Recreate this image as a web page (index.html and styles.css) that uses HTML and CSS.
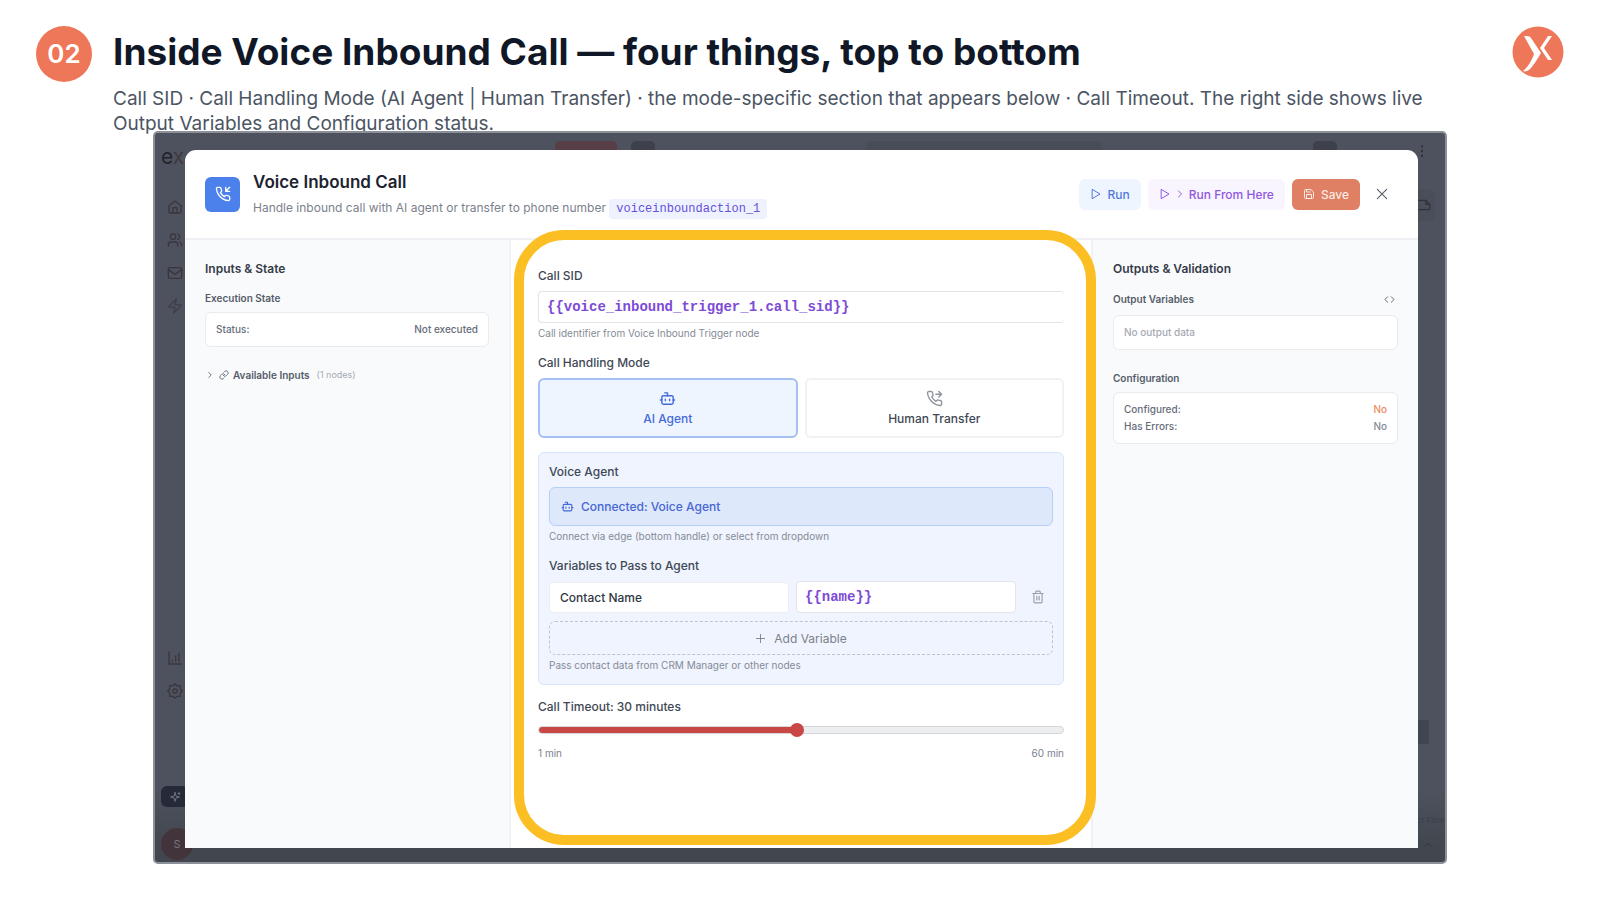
FILE: index.html
```html
<!DOCTYPE html>
<html lang="en">
<head>
    <meta charset="UTF-8">
    <title>Inside Voice Inbound Call</title>
    <link rel="stylesheet" href="styles.css">
</head>
<body>
    <!-- Icon shapes used more than once -->
    <svg class="sprite" aria-hidden="true">
        <symbol id="phone" viewBox="0 0 24 24"><path d="M22 16.92v3a2 2 0 0 1-2.18 2 19.79 19.79 0 0 1-8.63-3.07 19.5 19.5 0 0 1-6-6 19.79 19.79 0 0 1-3.07-8.67A2 2 0 0 1 4.11 2h3a2 2 0 0 1 2 1.72 12.84 12.84 0 0 0 .7 2.81 2 2 0 0 1-.45 2.11L8.09 9.91a16 16 0 0 0 6 6l1.27-1.27a2 2 0 0 1 2.11-.45 12.84 12.84 0 0 0 2.81.7A2 2 0 0 1 22 16.92z"/></symbol>
        <symbol id="bot" viewBox="0 0 24 24"><path d="M12 8V4H8"/><rect x="4" y="8" width="16" height="12" rx="2"/><path d="M2 14h2M20 14h2M15 13v2M9 13v2"/></symbol>
        <symbol id="play" viewBox="0 0 24 24"><path d="M5 3l15 9-15 9z"/></symbol>
        <symbol id="chevron" viewBox="0 0 24 24"><path d="M9 18l6-6-6-6"/></symbol>
    </svg>

    <header class="slide-header">
        <span class="step-badge">02</span>
        <div class="slide-text">
            <h1>Inside Voice Inbound Call — four things, top to bottom</h1>
            <p>Call SID · Call Handling Mode (AI Agent | Human Transfer) · the mode-specific section that appears below · Call Timeout. The right side shows live Output Variables and Configuration status.</p>
        </div>
        <svg class="brand" viewBox="0 0 52 52" aria-label="Logo">
            <circle cx="26" cy="26" r="25.5" fill="#ee7759"/>
            <path d="M12 10c3 0 6 0 7 2l10 15c-4 7-8 13-12 17-2 1-4 2-6 1 5-4 9-11 11-17z" fill="#fff"/>
            <path d="M40 10h-4l-8 12 8 12h4l-8-12z" fill="#fff"/>
        </svg>
    </header>

    <main class="frame">
        <!-- Dimmed app behind the dialog -->
        <div class="app" aria-hidden="true">
            <div class="app-top">
                <span class="app-logo">e<span>x</span></span>
                <span class="chip red"></span>
                <span class="chip dark"></span>
                <span class="chip wide"></span>
                <span class="chip dark small"></span>
                <svg class="icon dots" viewBox="0 0 24 24"><path d="M12 4v.1M12 12v.1M12 20v.1"/></svg>
            </div>
            <div class="app-side">
                <svg class="icon" viewBox="0 0 24 24"><path d="M3 10l9-7 9 7v9a2 2 0 0 1-2 2H5a2 2 0 0 1-2-2z"/><path d="M9 21v-8h6v8"/></svg>
                <svg class="icon" viewBox="0 0 24 24"><path d="M16 21v-2a4 4 0 0 0-4-4H6a4 4 0 0 0-4 4v2"/><circle cx="9" cy="7" r="4"/><path d="M22 21v-2a4 4 0 0 0-3-3.87M16 3.13a4 4 0 0 1 0 7.75"/></svg>
                <svg class="icon" viewBox="0 0 24 24"><rect x="2" y="4" width="20" height="16" rx="2"/><path d="M22 7l-10 7L2 7"/></svg>
                <svg class="icon faint" viewBox="0 0 24 24"><path d="M4 14a1 1 0 0 1-.8-1.6l9.9-10.2a.5.5 0 0 1 .9.5L12 9a1 1 0 0 0 1 1h7a1 1 0 0 1 .8 1.6l-9.9 10.2a.5.5 0 0 1-.9-.5L12 15a1 1 0 0 0-1-1z"/></svg>
                <svg class="icon lower" viewBox="0 0 24 24"><path d="M3 3v18h18M8 17v-2M13 17V9M18 17V5"/></svg>
                <svg class="icon" viewBox="0 0 24 24"><path d="M12 1l3 3 5 0 0 5 3 3-3 3 0 5-5 0-3 3-3-3-5 0 0-5-3-3 3-3 0-5 5 0z"/><circle cx="12" cy="12" r="3"/></svg>
                <span class="sparkle"><svg class="icon" viewBox="0 0 24 24"><path d="M12 3l2 7 7 2-7 2-2 7-2-7-7-2 7-2zM20 3v4M18 5h4"/></svg></span>
                <span class="avatar">S</span>
            </div>
            <div class="app-right">
                <span class="note"><svg class="icon" viewBox="0 0 24 24"><path d="M2 4h13l7 7v7a2 2 0 0 1-2 2H2M15 4v7h7"/></svg></span>
                <span class="map"></span>
                <span class="flow">ct Flow</span>
                <svg class="icon" viewBox="0 0 24 24"><path d="M5 15l7-7 7 7"/></svg>
            </div>
        </div>

        <section class="modal">
            <header class="modal-header">
                <span class="node-icon"><svg class="icon" viewBox="0 0 24 24"><use href="#phone"/><path d="M16 2v6h6M22 2l-6 6"/></svg></span>
                <div class="node-title">
                    <h2>Voice Inbound Call</h2>
                    <p>Handle inbound call with AI agent or transfer to phone number <code>voiceinboundaction_1</code></p>
                </div>
                <div class="actions">
                    <button class="btn run"><svg class="icon"><use href="#play"/></svg>Run</button>
                    <button class="btn run-from"><svg class="icon"><use href="#play"/></svg><svg class="icon"><use href="#chevron"/></svg><span>Run From Here</span></button>
                    <button class="btn save"><svg class="icon" viewBox="0 0 24 24"><path d="M15 3H5a2 2 0 0 0-2 2v14a2 2 0 0 0 2 2h14a2 2 0 0 0 2-2V9z"/><path d="M17 21v-8H7v8M7 3v5h8"/></svg>Save</button>
                    <button class="close" aria-label="Close"><svg class="icon" viewBox="0 0 24 24"><path d="M4 4l16 16M20 4L4 20"/></svg></button>
                </div>
            </header>

            <div class="modal-body">
                <!-- Inputs -->
                <aside class="side">
                    <h3>Inputs &amp; State</h3>
                    <h4>Execution State</h4>
                    <div class="card"><div class="row"><span>Status:</span><span>Not executed</span></div></div>
                    <button class="available">
                        <svg class="icon"><use href="#chevron"/></svg>
                        <svg class="icon" viewBox="0 0 24 24"><path d="M10 13a5 5 0 0 0 7.540.540l3-3a5 5 0 0 0-7.070-7.070l-1.720 1.710"/><path d="M14 11a5 5 0 0 0-7.540-.540l-3 3a5 5 0 0 0 7.070 7.070l1.710-1.710"/></svg>
                        Available Inputs <small>(1 nodes)</small>
                    </button>
                </aside>

                <!-- Node settings -->
                <div class="settings">
                    <label class="label" for="call-sid">Call SID</label>
                    <input class="field sid" id="call-sid" type="text" value="{{voice_inbound_trigger_1.call_sid}}">
                    <p class="help">Call identifier from Voice Inbound Trigger node</p>

                    <span class="label spaced">Call Handling Mode</span>
                    <div class="modes">
                        <button class="mode active"><svg class="icon"><use href="#bot"/></svg>AI Agent</button>
                        <button class="mode"><svg class="icon" viewBox="0 0 24 24"><use href="#phone"/><path d="M18 2l4 4-4 4M14 6h8"/></svg>Human Transfer</button>
                    </div>

                    <div class="agent">
                        <span class="label">Voice Agent</span>
                        <div class="connected"><svg class="icon"><use href="#bot"/></svg>Connected: Voice Agent</div>
                        <p class="help">Connect via edge (bottom handle) or select from dropdown</p>

                        <span class="label spaced">Variables to Pass to Agent</span>
                        <div class="variable">
                            <input class="field name" type="text" value="Contact Name" aria-label="Variable name">
                            <input class="field value" type="text" value="{{name}}" aria-label="Variable value">
                            <button class="trash" aria-label="Remove variable"><svg class="icon" viewBox="0 0 24 24"><path d="M3 6h18M19 6v14a2 2 0 0 1-2 2H7a2 2 0 0 1-2-2V6M8 6V4a2 2 0 0 1 2-2h4a2 2 0 0 1 2 2v2M10 11v6M14 11v6"/></svg></button>
                        </div>
                        <button class="add"><svg class="icon" viewBox="0 0 24 24"><path d="M3 12h18M12 3v18"/></svg>Add Variable</button>
                        <p class="help">Pass contact data from CRM Manager or other nodes</p>
                    </div>

                    <label class="label spaced" for="timeout">Call Timeout: 30 minutes</label>
                    <input class="slider" id="timeout" type="range" min="1" max="60" value="30">
                    <div class="range"><span>1 min</span><span>60 min</span></div>
                </div>

                <!-- Outputs -->
                <aside class="side outputs">
                    <h3>Outputs &amp; Validation</h3>
                    <h4>Output Variables <svg class="icon" viewBox="0 0 24 24"><path d="M8 6l-6 6 6 6M16 6l6 6-6 6"/></svg></h4>
                    <div class="card empty">No output data</div>
                    <h4 class="config-title">Configuration</h4>
                    <div class="card">
                        <div class="row"><span>Configured:</span><span class="warn">No</span></div>
                        <div class="row"><span>Has Errors:</span><span class="muted">No</span></div>
                    </div>
                </aside>
            </div>
        </section>
    </main>
</body>
</html>
```
FILE: styles.css
```css
* {
    box-sizing: border-box;
}

body {
    margin: 0;
    min-height: 100vh;
    display: flex;
    flex-direction: column;
    background: #fff;
    color: #414855;
    font-family: Inter, "Liberation Sans", sans-serif;
}

h1, h2, h3, h4, p {
    margin: 0;
}

button, input {
    font-family: inherit;
    margin: 0;
}

button {
    border: none;
    background: none;
    padding: 0;
    cursor: pointer;
}

.sprite {
    position: absolute;
    width: 0;
    height: 0;
}

.icon {
    width: 14px;
    height: 14px;
    fill: none;
    stroke: currentColor;
    stroke-width: 2;
    stroke-linecap: round;
    stroke-linejoin: round;
    flex-shrink: 0;
}

/* Slide heading */
.slide-header {
    display: flex;
    align-items: flex-start;
    padding: 26px 36px 0;
    height: 131px;
}

.step-badge {
    width: 56px;
    height: 56px;
    border-radius: 50%;
    background: #ee7759;
    color: #fff;
    font-size: 26px;
    font-weight: 600;
    line-height: 56px;
    text-align: center;
    flex-shrink: 0;
    margin-right: 21px;
}

.slide-text {
    flex: 1;
}

.slide-text h1 {
    color: #101828;
    font-size: 37px;
    font-weight: 700;
    line-height: 52px;
}

.slide-text p {
    max-width: 1360px;
    padding-top: 8px;
    color: #4b5563;
    font-size: 19px;
    line-height: 25px;
}

.brand {
    width: 52px;
    height: 52px;
    flex-shrink: 0;
}

/* Screenshot frame */
.frame {
    position: relative;
    flex: 1;
    display: flex;
    margin: 0 153px 36px;
    padding: 17px 27px 14px 30px;
    border: 2px solid #8b9099;
    border-radius: 5px;
    background: linear-gradient(#4d525e 90%, #42464e 98%);
}

.app {
    position: absolute;
    inset: 0;
    overflow: hidden;
    color: #30313a;
}

.app-top {
    display: flex;
    height: 50px;
    padding: 8px 16px 0 6px;
    gap: 14px;
}

.app-logo {
    width: 380px;
    color: #22242d;
    font-size: 21px;
    line-height: 32px;
}

.app-logo span {
    color: #43383e;
}

.chip {
    width: 62px;
    height: 22px;
    border-radius: 5px;
    background: #583e46;
}

.chip.dark {
    width: 24px;
    background: #3e414b;
}

.chip.wide {
    width: 236px;
    margin: 0 auto;
    background: #484d58;
}

.chip.small {
    margin-right: 64px;
}

.app-top .dots {
    margin-top: 3px;
    stroke-width: 4;
}

.app-side {
    position: absolute;
    top: 66px;
    bottom: 0;
    left: 0;
    width: 40px;
    display: flex;
    flex-direction: column;
    align-items: center;
    gap: 17px;
    color: #3b363e;
}

.app-side .icon {
    width: 16px;
    height: 16px;
}

.app-side .faint {
    opacity: 0.7;
}

.app-side .lower {
    margin-top: auto;
}

.sparkle {
    display: flex;
    align-items: center;
    justify-content: center;
    width: 28px;
    height: 21px;
    margin-top: 70px;
    border-radius: 6px;
    background: #252938;
    color: #70737d;
}

.app-side .sparkle .icon {
    width: 12px;
    height: 12px;
}

.avatar {
    width: 32px;
    height: 32px;
    margin: 4px 0 2px 4px;
    border-radius: 50%;
    background: #43343b;
    color: #777780;
    font-size: 11px;
    line-height: 32px;
    text-align: center;
    flex-shrink: 0;
}

.app-right {
    position: absolute;
    top: 56px;
    right: 0;
    bottom: 12px;
    width: 28px;
    display: flex;
    flex-direction: column;
}

.note {
    width: 18px;
    padding: 9px 0;
    border-radius: 0 6px 6px 0;
    background: #494e59;
    line-height: 0;
}

.map {
    width: 12px;
    height: 24px;
    margin-top: auto;
    margin-bottom: 70px;
    background: #41454f;
}

.flow {
    color: #3b3f48;
    font-size: 8px;
    line-height: 12px;
    white-space: nowrap;
}

.app-right > .icon {
    width: 10px;
    height: 10px;
    margin: 14px 6px 0;
}

/* Dialog */
.modal {
    position: relative;
    flex: 1;
    display: flex;
    flex-direction: column;
    border-radius: 11px 11px 0 0;
    background: #fff;
}

.modal-header {
    display: flex;
    align-items: center;
    height: 90px;
    padding: 0 29px 0 20px;
    border-bottom: 2px solid #eff0f3;
}

.node-icon {
    display: flex;
    align-items: center;
    justify-content: center;
    width: 35px;
    height: 35px;
    margin-right: 13px;
    border-radius: 6px;
    background: #4c80ea;
    color: #fff;
}

.node-icon .icon {
    width: 16px;
    height: 16px;
}

.node-title {
    flex: 1;
}

.node-title h2 {
    color: #1d2330;
    font-size: 17px;
    font-weight: 600;
    line-height: 24px;
    padding-bottom: 4px;
}

.node-title p {
    color: #7b818d;
    font-size: 12px;
    line-height: 20px;
}

.node-title code {
    display: inline-block;
    padding: 0 7px;
    border-radius: 4px;
    background: #eef2ff;
    color: #6550dc;
    font-family: "Liberation Mono", monospace;
    font-size: 12px;
}

.actions {
    display: flex;
    align-items: center;
    gap: 7px;
}

.btn {
    display: flex;
    align-items: center;
    gap: 6px;
    height: 31px;
    padding: 0 11px;
    border-radius: 6px;
    font-size: 12px;
    font-weight: 500;
}

.btn .icon {
    width: 12px;
    height: 12px;
}

.run {
    background: #eff5ff;
    color: #5378df;
}

.run-from {
    gap: 3px;
    background: #f8f5ff;
    color: #9058e2;
}

.save {
    background: #df7f63;
    color: #fdeae4;
}

.close {
    margin-left: 8px;
    color: #59606c;
    line-height: 0;
}

.modal-body {
    flex: 1;
    display: grid;
    grid-template-columns: 326px 1fr 327px;
}

.side {
    padding: 21px 20px;
    border-right: 2px solid #f1f2f5;
    background: #f9fafc;
}

.outputs {
    border-right: none;
    border-left: 2px solid #f1f2f5;
}

.side h3 {
    color: #353c49;
    font-size: 12px;
    font-weight: 600;
    line-height: 16px;
}

.side h4 {
    display: flex;
    align-items: center;
    justify-content: space-between;
    margin: 13px 0 6px;
    color: #555c69;
    font-size: 10px;
    font-weight: 600;
    line-height: 16px;
}

.outputs h4 {
    margin: 14px 0 8px;
}

.outputs h4 .icon {
    width: 11px;
    height: 11px;
    margin-right: 3px;
}

.outputs .config-title {
    margin: 20px 0 6px;
}

.card {
    padding: 8px 10px;
    border: 1px solid #e9ebef;
    border-radius: 6px;
    background: #fff;
    font-size: 10px;
    font-weight: 500;
    line-height: 17px;
}

.card.empty {
    color: #a5aab3;
}

.row {
    display: flex;
    justify-content: space-between;
    color: #666d79;
}

.warn {
    color: #ef8a62;
}

.muted {
    color: #858b96;
}

.available {
    display: flex;
    align-items: center;
    gap: 4px;
    margin-top: 20px;
    color: #555c69;
    font-size: 10px;
    font-weight: 600;
    line-height: 16px;
}

.available .icon {
    width: 10px;
    height: 10px;
}

.available small {
    margin-left: 3px;
    color: #a5aab3;
    font-size: 9px;
    font-weight: 400;
}

/* Settings column */
.settings {
    position: relative;
    padding: 28px 27px;
}

/* Highlight ring drawn over the column */
.settings::after {
    content: "";
    position: absolute;
    inset: -10px -5px 3px 3px;
    border: 10px solid #fbbf24;
    border-radius: 50px;
    pointer-events: none;
}

.label {
    display: block;
    margin-bottom: 7px;
    font-size: 12px;
    font-weight: 500;
    line-height: 16px;
}

.spaced {
    margin-top: 14px;
}

.help {
    margin-top: 2px;
    color: #858b96;
    font-size: 10px;
    line-height: 16px;
}

.field {
    display: block;
    width: 100%;
    min-width: 0;
    height: 32px;
    padding: 0 8px;
    border: 1px solid #e2e4e9;
    border-radius: 4px;
    background: #fff;
    color: #7d4bd6;
    font-family: "Liberation Mono", monospace;
    font-size: 14px;
    font-weight: 700;
}

.sid {
    border-right: none;
}

.modes {
    display: grid;
    grid-template-columns: 1fr 1fr;
    gap: 7px;
}

.mode {
    display: flex;
    flex-direction: column;
    align-items: center;
    justify-content: center;
    gap: 4px;
    height: 60px;
    border: 2px solid #f0f1f4;
    border-radius: 6px;
    background: #fff;
    color: #414855;
    font-size: 12px;
    font-weight: 500;
    line-height: 16px;
}

.mode .icon {
    width: 17px;
    height: 17px;
    color: #8f949e;
}

.mode.active,
.mode.active .icon {
    color: #456ada;
}

.mode.active {
    border-color: #a4c0f5;
    background: #eff5fe;
}

.agent {
    margin-top: 14px;
    padding: 11px 10px;
    border: 1px solid #d7e4fb;
    border-radius: 6px;
    background: #eff4fe;
}

.connected {
    display: flex;
    align-items: center;
    gap: 7px;
    height: 39px;
    padding: 0 11px;
    border: 1px solid #b7cff8;
    border-radius: 6px;
    background: #dde8fa;
    color: #4766d5;
    font-size: 12px;
    font-weight: 500;
}

.connected .icon {
    width: 13px;
    height: 13px;
}

.variable {
    display: grid;
    grid-template-columns: 12fr 11fr 30px;
    align-items: center;
    gap: 7px;
}

.field.name {
    height: 31px;
    padding: 0 10px;
    border-color: #eceef2;
    color: #303744;
    font-family: inherit;
    font-size: 12px;
    font-weight: 500;
}

.trash {
    color: #9b9fa7;
    line-height: 0;
}

.add {
    display: flex;
    align-items: center;
    justify-content: center;
    gap: 8px;
    width: 100%;
    height: 34px;
    margin-top: 8px;
    border: 1px dashed #bfc3cb;
    border-radius: 6px;
    color: #7c818b;
    font-size: 12px;
}

.add .icon {
    width: 11px;
    height: 11px;
}

.slider {
    appearance: none;
    display: block;
    width: 100%;
    height: 16px;
    background: none;
}

.slider::-webkit-slider-runnable-track {
    height: 8px;
    border: 1px solid #d5d7db;
    border-radius: 4px;
    background: linear-gradient(to right, #c94745 49%, #eceef0 49%);
    background-origin: border-box;
}

.slider::-webkit-slider-thumb {
    appearance: none;
    width: 14px;
    height: 14px;
    margin-top: -4px;
    border-radius: 50%;
    background: #c94745;
}

.range {
    display: flex;
    justify-content: space-between;
    margin-top: 7px;
    color: #7b818d;
    font-size: 10px;
    line-height: 16px;
}
```
